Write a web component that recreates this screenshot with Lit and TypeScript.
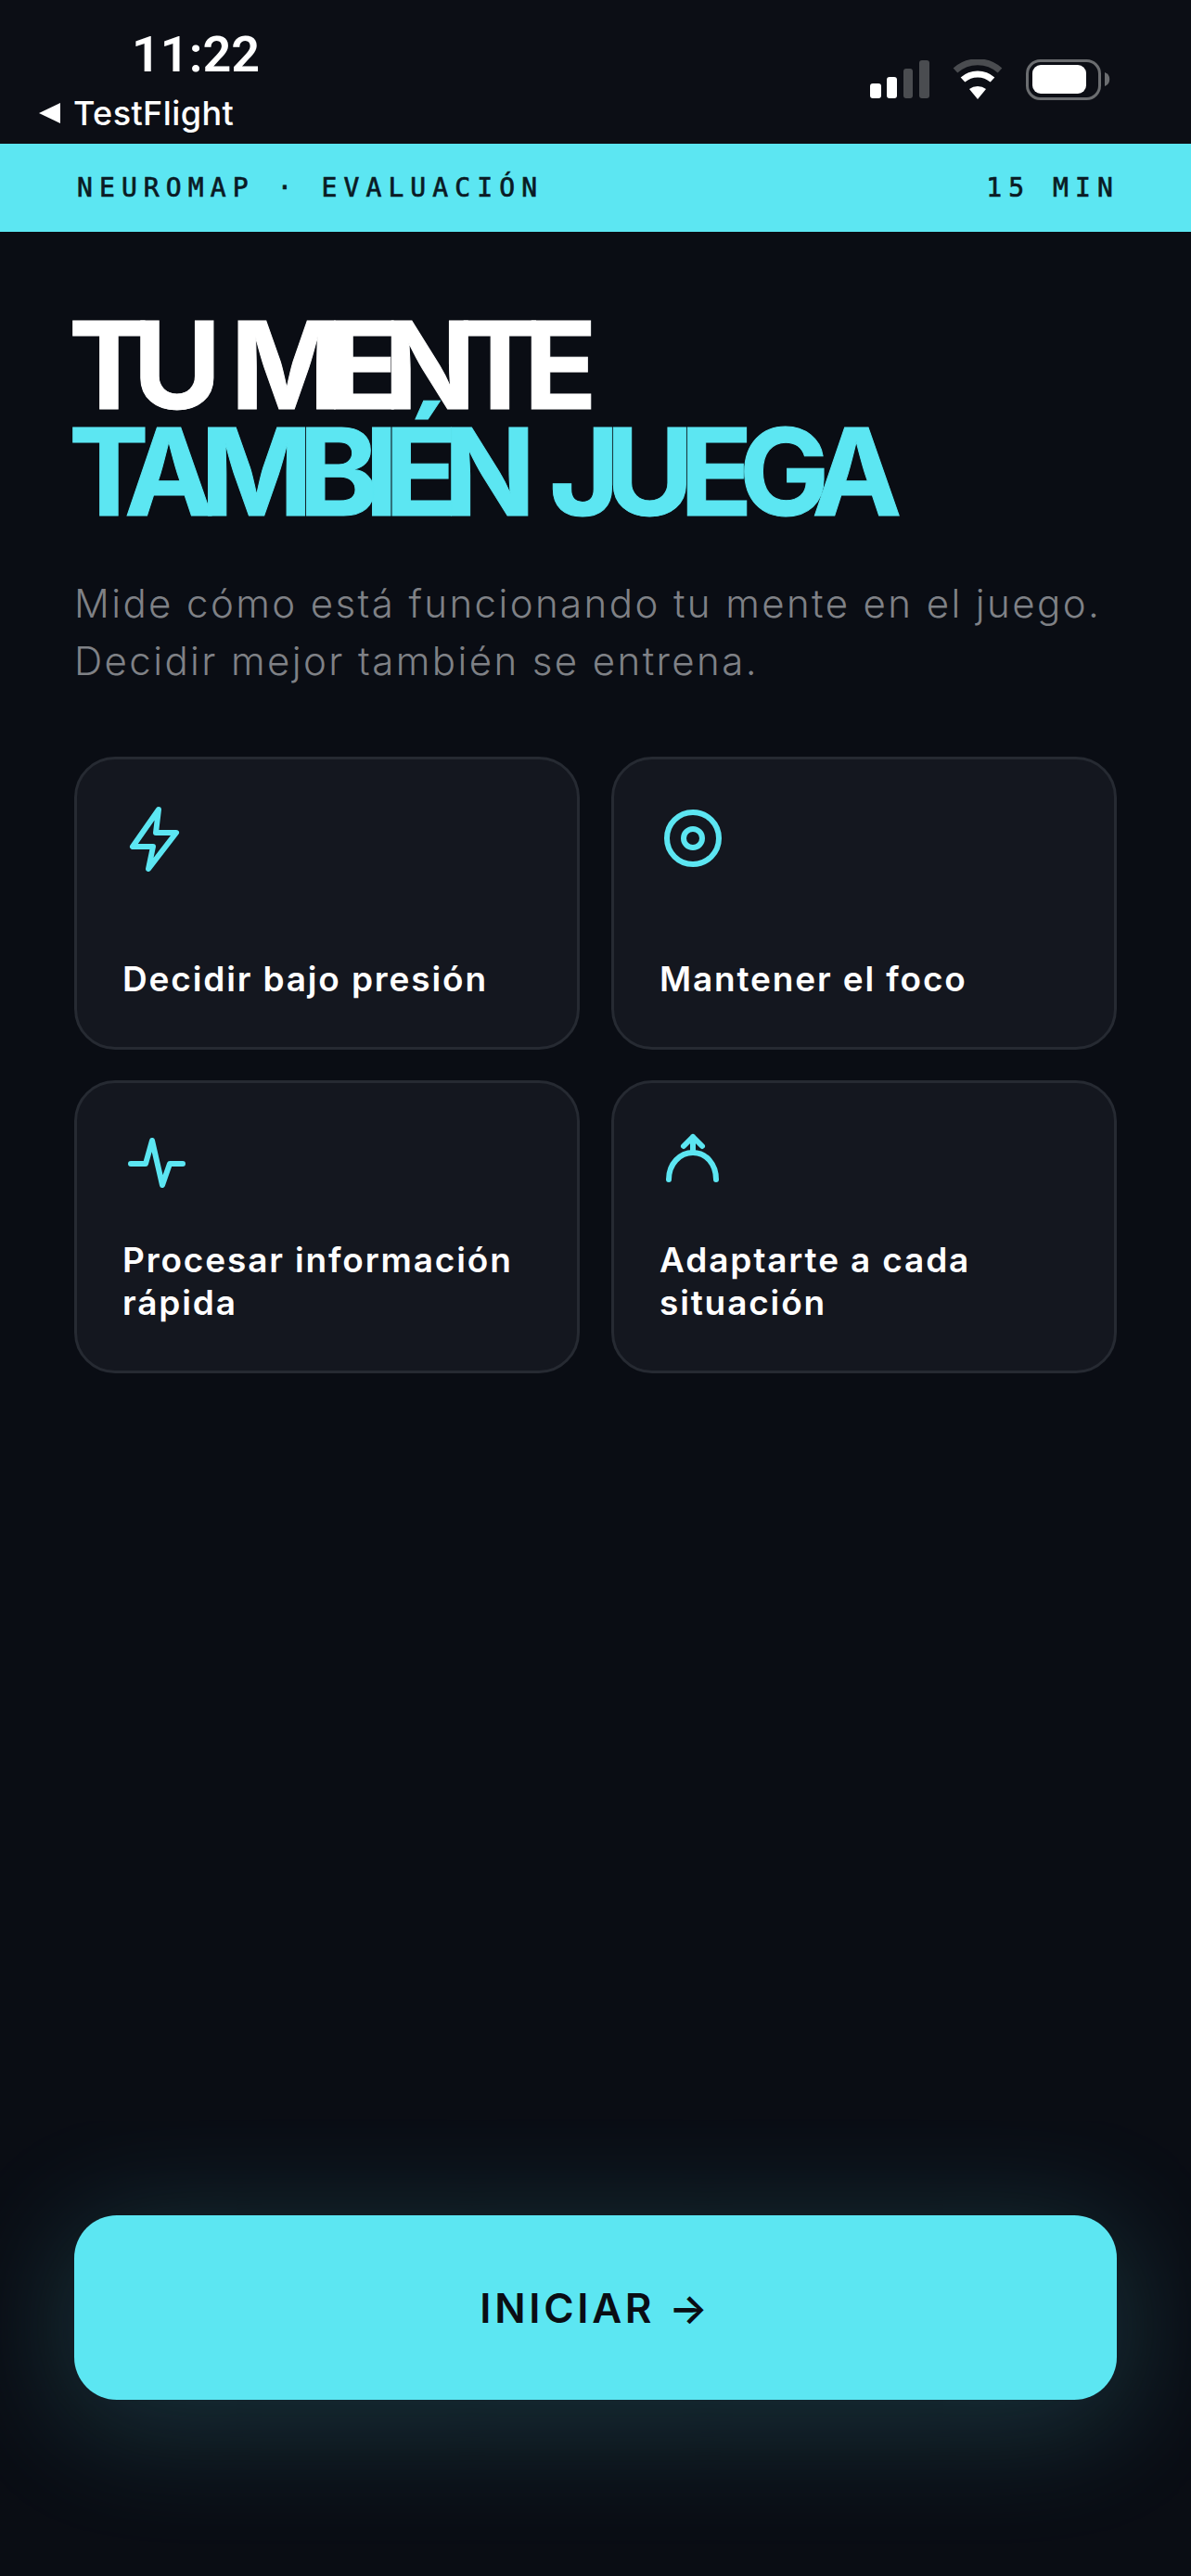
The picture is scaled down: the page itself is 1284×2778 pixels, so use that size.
import { LitElement, html, css, svg } from "lit";
import { customElement } from "lit/decorators.js";

const cards = [
  { label: "Decidir bajo presión", icon: svg`<path d="M39 5 11 45h22l-5 24 30-39H36z"/>` },
  { label: "Mantener el foco", icon: svg`<circle cx="36" cy="36" r="28"/><circle cx="36" cy="36" r="10"/>` },
  { label: "Procesar información rápida", icon: svg`<path d="M9 38h16l7-25 11 48 8-23h14"/>` },
  { label: "Adaptarte a cada situación", icon: svg`<path d="M10 55C10 38 22 26 36 26s25 12 25 29"/><path d="M36 26V9M26 19 36 9l10 10"/>` },
];

@customElement("app-root")
export class AppRoot extends LitElement {
  static styles = css`
    :host { display: block; }
    .page {
      width: 1284px; height: 2778px; background: #0a0d14; display: flex; flex-direction: column;
      overflow: hidden; font-family: "Inter", "Liberation Sans", sans-serif; color: #fff;
    }
    .status { height: 155px; background: #0c0e15; display: flex; justify-content: space-between; flex-shrink: 0; }
    .status-left { padding: 29px 0 0 42px; display: flex; flex-direction: column; }
    .time { font: 600 54px/60px "Roboto", sans-serif; margin-left: 100px; }
    .back { display: flex; align-items: center; gap: 13px; font-size: 36px; line-height: 44px; font-weight: 500; letter-spacing: 0.4px; margin-top: 11px; }
    .status-right { padding: 64px 87px 0 0; }
    .status-right svg { display: block; }
    .banner {
      height: 95px; background: #5ce6f2; color: #0a1a24; display: flex; align-items: center; justify-content: space-between;
      padding: 0 77px 0 83px; font: 400 28px/1 "DejaVu Sans Mono", monospace; -webkit-text-stroke: 0.7px #0a1a24; letter-spacing: 7.1px; flex-shrink: 0;
    }
    main { padding: 0 80px; display: flex; flex-direction: column; flex: 1; }
    h1 { margin: 86px 0 0 -6px; font: 700 130px/115px "Inter", sans-serif; letter-spacing: -17.4px; word-spacing: 14px; white-space: nowrap; -webkit-text-stroke: 1px #fff; }
    h1 span { display: block; }
    h1 .accent { color: #5ce6f2; letter-spacing: -15.1px; -webkit-text-stroke: 1px #5ce6f2; }
    p { margin: 54px 0 0; font-size: 42px; line-height: 62px; font-weight: 300; color: #7f8186; letter-spacing: 2.4px; white-space: nowrap; }
    .grid { margin-top: 72px; display: grid; grid-template-columns: 545px 545px; gap: 33px 34px; }
    .card {
      box-sizing: border-box; height: 316px; background: #14171f; border: 3px solid #262a32; border-radius: 44px;
      padding: 49px 49px 50px; display: flex; flex-direction: column; justify-content: space-between;
    }
    .card svg { display: block; fill: none; stroke: #5ce6f2; stroke-width: 6; stroke-linecap: round; stroke-linejoin: round; }
    .label { font-size: 37px; line-height: 46px; font-weight: 600; color: #fff; letter-spacing: 1.85px; }
    .cta {
      margin-top: auto; margin-bottom: 190px; height: 199px; border-radius: 46px; background: #5ce6f2; color: #0a0d14;
      box-shadow: 0 20px 130px 10px rgba(92, 230, 242, 0.18);
      display: flex; align-items: center; justify-content: center; font: 600 44px/1 "Inter", sans-serif; letter-spacing: 3.7px;
    }
  `;

  render() {
    return html`<div class="page">
      <div class="status">
        <div class="status-left">
          <div class="time">11:22</div>
          <div class="back">
            <svg width="24" height="24" viewBox="0 0 24 24"><path d="M0 12 23 1v22z" fill="#fff"/></svg>
            <span>TestFlight</span>
          </div>
        </div>
        <div class="status-right">
          <svg width="259" height="44" viewBox="0 0 259 44">
            <rect x="0" y="26" width="12" height="16" rx="3" fill="#fff"/>
            <rect x="18" y="19" width="11" height="23" rx="3" fill="#fff"/>
            <rect x="36" y="10" width="10" height="32" rx="3" fill="#4a4c50"/>
            <rect x="53" y="1" width="11" height="41" rx="3" fill="#4a4c50"/>
            <path d="M92 12a36 36 0 0 1 48 0" fill="none" stroke="#4a4c50" stroke-width="7"/>
            <path d="M100 22a24 24 0 0 1 32 0" fill="none" stroke="#fff" stroke-width="7"/>
            <path d="M107 32a15 15 0 0 1 18 0l-9 11z" fill="#fff"/>
            <rect x="169.500" y="1.500" width="78" height="41" rx="14" fill="none" stroke="#6b6d70" stroke-width="3"/>
            <rect x="175" y="6" width="58" height="31" rx="9" fill="#fff"/>
            <path d="M253 14a8 8 0 0 1 0 15z" fill="#6b6d70"/>
          </svg>
        </div>
      </div>
      <div class="banner"><span>NEUROMAP · EVALUACIÓN</span><span>15 MIN</span></div>
      <main>
        <h1><span>TU MENTE</span><span class="accent">TAMBIÉN JUEGA</span></h1>
        <p>Mide cómo está funcionando tu mente en el juego.<br />Decidir mejor también se entrena.</p>
        <div class="grid">
          ${cards.map(
            (c) => html`<div class="card">
              <svg width="72" height="72" viewBox="0 0 72 72">${c.icon}</svg>
              <div class="label">${c.label}</div>
            </div>`
          )}
        </div>
        <div class="cta">INICIAR →</div>
      </main>
    </div>`;
  }
}
